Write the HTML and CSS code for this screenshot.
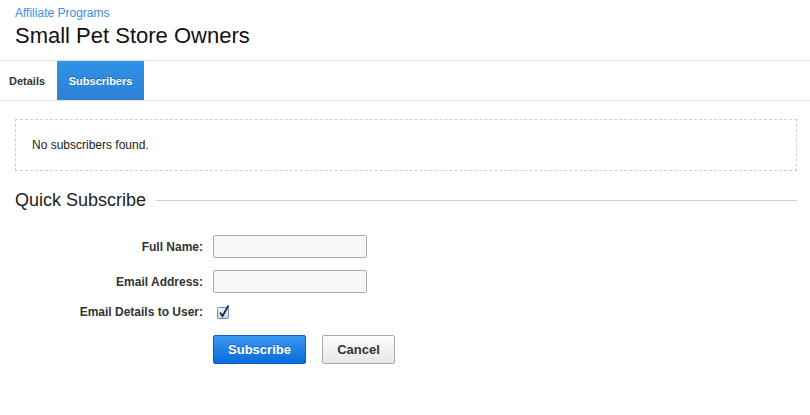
FILE: index.html
```html
<!DOCTYPE html>
<html>
<head>
<meta charset="utf-8">
<link rel="stylesheet" href="styles.css">
</head>
<body>
<div class="header">
  <a class="crumb" href="#">Affiliate Programs</a>
  <h1 class="title">Small Pet Store Owners</h1>
</div>
<div class="tabs">
  <div class="tab">Details</div>
  <div class="tab active">Subscribers</div>
</div>
<div class="content">
  <div class="empty">No subscribers found.</div>
  <div class="section-head">
    <span class="section-title">Quick Subscribe</span>
    <span class="section-rule"></span>
  </div>
  <form class="form">
    <label class="lbl">Full Name:</label>
    <input class="field" type="text">
    <label class="lbl">Email Address:</label>
    <input class="field" type="text">
    <label class="lbl">Email Details to User:</label>
    <span class="check">
      <svg width="14" height="14" viewBox="0 0 14 14">
        <defs>
          <linearGradient id="cb" x1="0" y1="0" x2="0" y2="1">
            <stop offset="0" stop-color="#eef3fa"/>
            <stop offset="1" stop-color="#c5d6ee"/>
          </linearGradient>
        </defs>
        <rect x="0.5" y="2.5" width="11" height="11" rx="1" fill="url(#cb)" stroke="#7a8aa5"/>
        <path d="M3 7.5 L5.5 11 L11.5 0.5" fill="none" stroke="#1b2a4a" stroke-width="1.8"/>
      </svg>
    </span>
    <span></span>
    <div class="actions">
      <button type="button" class="btn primary">Subscribe</button>
      <button type="button" class="btn">Cancel</button>
    </div>
  </form>
</div>
</body>
</html>
```
FILE: styles.css
```css
html, body {
  margin: 0;
  padding: 0;
  background: #fff;
  font-family: "Liberation Sans", Arial, sans-serif;
  color: #222;
}
.header {
  padding: 6px 15px 0 15px;
  height: 54px;
  box-sizing: border-box;
}
.crumb {
  display: block;
  font-size: 12px;
  line-height: 15px;
  color: #3a8ee6;
  text-decoration: none;
}
.title {
  margin: 2px 0 0 0;
  font-size: 22px;
  line-height: 26px;
  font-weight: normal;
  color: #111;
}
.tabs {
  margin-top: 6px;
  display: flex;
  border-top: 1px solid #e2e2e2;
  border-bottom: 1px solid #e2e2e2;
  height: 39px;
}
.tab {
  padding: 0 12px 0 9px;
  font-size: 11px;
  font-weight: bold;
  color: #333;
  display: flex;
  align-items: center;
}
.tab.active {
  padding: 0 12px;
  width: 87px;
  box-sizing: border-box;
  justify-content: center;
  color: #fff;
  background: linear-gradient(#2e94e6, #2f7fd6);
  text-shadow: 0 -1px 0 rgba(0,0,0,0.3);
}
.content {
  padding: 18px 13px 0 15px;
}
.empty {
  border: 1px dashed #cfcfcf;
  height: 52px;
  box-sizing: border-box;
  padding-left: 16px;
  display: flex;
  align-items: center;
  font-size: 12px;
  color: #222;
}
.section-head {
  display: flex;
  align-items: center;
  margin-top: 18px;
  height: 22px;
}
.section-title {
  font-size: 18px;
  color: #222;
}
.section-rule {
  flex: 1;
  height: 1px;
  background: #d0d0d0;
  margin-left: 10px;
}
.form {
  margin-top: 24px;
  display: grid;
  grid-template-columns: 188px auto;
  column-gap: 10px;
  row-gap: 12px;
  align-items: center;
  justify-items: start;
}
.lbl {
  justify-self: end;
  font-size: 12px;
  font-weight: bold;
  color: #333;
}
.field {
  width: 154px;
  height: 23px;
  box-sizing: border-box;
  border: 1px solid #a9a9a9;
  border-radius: 2px;
  background: #f6f7f9;
  margin: 0;
}
.check {
  display: block;
  height: 14px;
  margin-left: 4px;
}
.check svg {
  display: block;
}
.actions {
  display: flex;
  gap: 16px;
  margin-top: 4px;
}
.btn {
  height: 29px;
  box-sizing: border-box;
  padding: 0 10px;
  font-family: "Liberation Sans", Arial, sans-serif;
  font-size: 13px;
  font-weight: bold;
  color: #333;
  border: 1px solid #aaa;
  border-radius: 2px;
  background: linear-gradient(#fdfdfd, #e6e6e6);
  width: 73px;
}
.btn.primary {
  width: 93px;
  color: #fff;
  border-color: #0b5fc4;
  background: linear-gradient(#3b97f1, #0a6bd9);
  text-shadow: 0 -1px 0 rgba(0,0,0,0.25);
}
```
